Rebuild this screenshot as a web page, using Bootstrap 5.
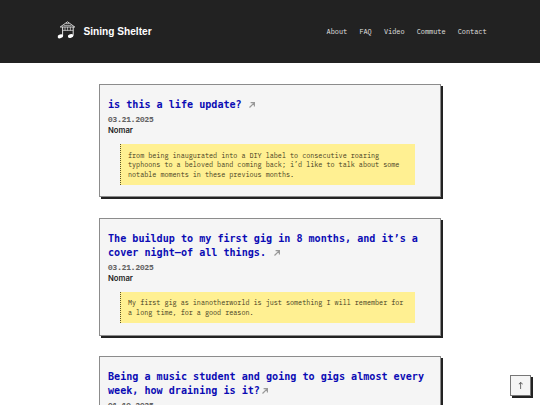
<!DOCTYPE html>
<html lang="en">
<head>
  <meta charset="UTF-8">
  <meta name="viewport" content="width=device-width, initial-scale=1.0">
  <title>Sining Shelter</title>
  <link href="https://cdn.jsdelivr.net/npm/bootstrap@5.3.0/dist/css/bootstrap.min.css" rel="stylesheet">

  <style>
    body {
      font-family: "IBM Plex Mono", "Liberation Mono", monospace;
      font-size: 6.75px;
      background-color: #fff;
      overflow: hidden;
      height: 405px;
    }

    .site-header {
      background-color: #222;
      height: 63px;
      padding: 0 53.5px 0 57px;
    }

    .site-header svg {
      position: relative;
      top: -2px;
    }

    .brand-name {
      font-family: "Liberation Sans", Arial, sans-serif;
      font-size: 10.15px;
      font-weight: bold;
      color: #fff;
      margin-left: 7.5px;
      padding-top: 1px;
    }

    .site-nav {
      gap: 12.2px;
    }

    .site-nav .nav-link {
      color: #e4e4e4;
      font-size: 6.87px;
      line-height: 10px;
    }

    .post-list {
      width: 342px;
      padding-top: 21px;
      gap: 20.4px;
    }

    .post {
      background-color: #f5f5f5;
      border: 1px solid #8c8c8c;
      border-radius: 0;
      box-shadow: 2px 2px 0 #222;
      padding: 13px 8px 11.2px;
    }

    .post-title {
      font-family: "DejaVu Sans Mono", monospace;
      font-size: 10.1px;
      font-weight: bold;
      line-height: 14px;
      margin-bottom: 2px;
    }

    .post-title a {
      color: #0b0bb4;
    }

    .post-title svg {
      width: 6px;
      height: 6px;
      margin-left: 1.6px;
    }

    .post-date {
      font-size: 7.62px;
      font-weight: bold;
      line-height: 11px;
      color: #636363;
    }

    .post-author {
      font-family: Inter, "Liberation Sans", sans-serif;
      font-size: 7.7px;
      font-weight: 600;
      line-height: 12.4px;
      color: #222;
    }

    .post-excerpt {
      background-color: #fff092;
      border-left: 1px dotted #5c5428;
      color: #3f3a1d;
      line-height: 9.4px;
      margin: 6.7px 17px 0 12px;
      padding: 6.7px 10px 6.1px 7px;
    }

    .to-top {
      right: 9px;
      bottom: 9px;
      width: 21px;
      height: 21px;
      background-color: #f5f5f5;
      border: 1px solid #777;
      box-shadow: 2px 2px 0 #222;
      color: #333;
      font-size: 10px;
    }
  </style>
</head>
<body>

  <header class="site-header d-flex justify-content-between align-items-center">
    <a href="#" class="d-flex align-items-center text-decoration-none">
      <svg width="19" height="20" viewBox="0 0 19 20" fill="none" stroke="#e0e0e0" stroke-width=".9">
        <path d="M3.2 7L10.5 1.8L17.8 7Z"/>
        <path d="M5.6 6.8V16M16.2 6.8V15.6" stroke-width="1"/>
        <path d="M8 7V10.6M10.6 7V10.6M13.4 7V10.6M5.6 10.4H16.2M6.6 5.4H14.4M9 3.6H12" stroke-width=".7"/>
        <ellipse cx="3.4" cy="16.3" rx="2.8" ry="1.9" transform="rotate(-18 3.4 16.3)" fill="#fff" stroke="none"/>
        <ellipse cx="13.6" cy="16" rx="2.8" ry="1.9" transform="rotate(-18 13.6 16)" fill="#fff" stroke="none"/>
      </svg>
      <span class="brand-name">Sining Shelter</span>
    </a>
    <nav class="nav site-nav">
      <a class="nav-link p-0" href="#">About</a>
      <a class="nav-link p-0" href="#">FAQ</a>
      <a class="nav-link p-0" href="#">Video</a>
      <a class="nav-link p-0" href="#">Commute</a>
      <a class="nav-link p-0" href="#">Contact</a>
    </nav>
  </header>

  <main class="post-list d-flex flex-column mx-auto">
    <article class="post">
      <h2 class="post-title"><a href="#" class="text-decoration-none">is this a life update?</a>
        <svg viewBox="0 0 6 6" fill="none" stroke="#999" stroke-width="1.2"><path d="M.5 5.5L5.2 .8M1.6 .6H5.4V4.4"/></svg></h2>
      <div class="post-date">03.21.2025</div>
      <div class="post-author">Nomar</div>
      <div class="post-excerpt">from being inaugurated into a DIY label to consecutive roaring<br>typhoons to a beloved band coming back; i’d like to talk about some<br>notable moments in these previous months.</div>
    </article>

    <article class="post">
      <h2 class="post-title"><a href="#" class="text-decoration-none">The buildup to my first gig in 8 months, and it’s a<br>cover night–of all things.</a>
        <svg viewBox="0 0 6 6" fill="none" stroke="#999" stroke-width="1.2"><path d="M.5 5.5L5.2 .8M1.6 .6H5.4V4.4"/></svg></h2>
      <div class="post-date">03.21.2025</div>
      <div class="post-author">Nomar</div>
      <div class="post-excerpt">My first gig as inanotherworld is just something I will remember for<br>a long time, for a good reason.</div>
    </article>

    <article class="post">
      <h2 class="post-title"><a href="#" class="text-decoration-none">Being a music student and going to gigs almost every<br>week, how draining is it?</a><svg viewBox="0 0 6 6" fill="none" stroke="#999" stroke-width="1.2"><path d="M.5 5.5L5.2 .8M1.6 .6H5.4V4.4"/></svg></h2>
      <div class="post-date">01.10.2025</div>
      <div class="post-author">Nomar</div>
    </article>
  </main>

  <a href="#" class="to-top position-fixed d-flex justify-content-center align-items-center text-decoration-none">↑</a>

  <script src="https://cdn.jsdelivr.net/npm/bootstrap@5.3.0/dist/js/bootstrap.bundle.min.js"></script>
</body>
</html>
